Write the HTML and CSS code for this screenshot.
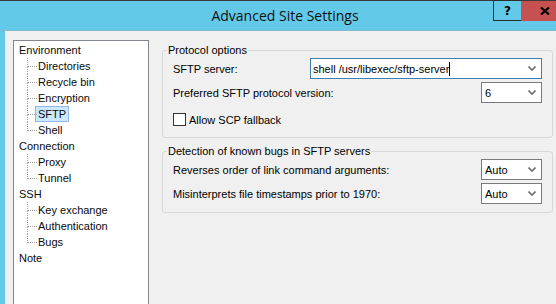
FILE: index.html
```html
<!DOCTYPE html>
<html lang="en">
<head>
    <meta charset="UTF-8">
    <title>Advanced Site Settings</title>
    <link rel="stylesheet" href="styles.css">
</head>
<body>
    <div class="window">
        <div class="titlebar">
            <div class="title">Advanced Site Settings</div>
            <div class="caption-buttons">
                <span class="cap-btn help">?</span>
                <span class="cap-btn close">
                    <svg width="10" height="8" viewBox="0 0 10 8"><path d="M1 0.5 L9 7.5 M9 0.5 L1 7.5" stroke="#000" stroke-width="2.2" fill="none"/></svg>
                </span>
            </div>
        </div>

        <div class="frame">
            <div class="client">
                <ul class="tree">
                    <li><span class="label">Environment</span>
                        <ul class="children">
                            <li><span class="label">Directories</span></li>
                            <li><span class="label">Recycle bin</span></li>
                            <li><span class="label">Encryption</span></li>
                            <li><span class="label selected">SFTP</span></li>
                            <li><span class="label">Shell</span></li>
                        </ul>
                    </li>
                    <li><span class="label">Connection</span>
                        <ul class="children">
                            <li><span class="label">Proxy</span></li>
                            <li><span class="label">Tunnel</span></li>
                        </ul>
                    </li>
                    <li><span class="label">SSH</span>
                        <ul class="children">
                            <li><span class="label">Key exchange</span></li>
                            <li><span class="label">Authentication</span></li>
                            <li><span class="label">Bugs</span></li>
                        </ul>
                    </li>
                    <li><span class="label">Note</span></li>
                </ul>

                <div class="page">
                    <fieldset class="group first">
                        <legend>Protocol options</legend>
                        <div class="row">
                            <label class="field-label fixed">SFTP server:</label>
                            <div class="combo focused wide">
                                <span class="combo-text">shell /usr/libexec/sftp-server</span><span class="caret"></span>
                                <svg class="arrow" width="8" height="5" viewBox="0 0 8 5"><polyline points="0.5,0.5 4,4 7.5,0.5" fill="none" stroke="#6d6d6d" stroke-width="1.6"/></svg>
                            </div>
                        </div>
                        <div class="row">
                            <label class="field-label">Preferred SFTP protocol version:</label>
                            <div class="combo">
                                <span class="combo-text">6</span>
                                <svg class="arrow" width="8" height="5" viewBox="0 0 8 5"><polyline points="0.5,0.5 4,4 7.5,0.5" fill="none" stroke="#6d6d6d" stroke-width="1.6"/></svg>
                            </div>
                        </div>
                        <div class="row check-row">
                            <span class="checkbox"></span>
                            <label class="check-label">Allow SCP fallback</label>
                        </div>
                    </fieldset>

                    <fieldset class="group second">
                        <legend>Detection of known bugs in SFTP servers</legend>
                        <div class="row">
                            <label class="field-label">Reverses order of link command arguments:</label>
                            <div class="combo">
                                <span class="combo-text">Auto</span>
                                <svg class="arrow" width="8" height="5" viewBox="0 0 8 5"><polyline points="0.5,0.5 4,4 7.5,0.5" fill="none" stroke="#6d6d6d" stroke-width="1.6"/></svg>
                            </div>
                        </div>
                        <div class="row">
                            <label class="field-label">Misinterprets file timestamps prior to 1970:</label>
                            <div class="combo">
                                <span class="combo-text">Auto</span>
                                <svg class="arrow" width="8" height="5" viewBox="0 0 8 5"><polyline points="0.5,0.5 4,4 7.5,0.5" fill="none" stroke="#6d6d6d" stroke-width="1.6"/></svg>
                            </div>
                        </div>
                    </fieldset>
                </div>
            </div>
        </div>
    </div>
</body>
</html>
```

FILE: styles.css
```css
body {
    margin: 0;
    font-family: 'Liberation Sans', Arial, sans-serif;
    font-size: 11px;
    color: #000;
}
.window {
    width: 556px;
    height: 304px;
    background-color: #63c9e9;
    display: flex;
    flex-direction: column;
    overflow: hidden;
}
.titlebar {
    position: relative;
    height: 31px;
    box-sizing: border-box;
    border-top: 1px solid #3a3a3a;
    border-bottom: 1px solid #86b9cc;
}
.title {
    font-family: 'Open Sans', sans-serif;
    font-size: 14px;
    line-height: 29px;
    text-align: center;
    padding-left: 14px;
    color: #111;
}
.caption-buttons {
    position: absolute;
    top: -1px;
    right: 0;
    display: flex;
}
.cap-btn {
    height: 21px;
    box-sizing: border-box;
    display: flex;
    justify-content: center;
    align-items: center;
    font-family: 'DejaVu Sans', sans-serif;
    font-weight: bold;
    font-size: 12px;
    color: #000;
}
.help {
    width: 28px;
    border: 1px solid #2e2e2e;
    border-right: none;
}
.close {
    width: 35px;
    background-color: #c75050;
    border-top: 1px solid #3a3a3a;
    justify-content: flex-start;
    padding: 0 0 1px 19px;
}
.frame {
    flex: 1;
    display: flex;
    padding-left: 5px;
}
.client {
    flex: 1;
    display: flex;
    align-items: flex-start;
    gap: 13px;
    background-color: #f0f0f0;
    padding: 9px 3px 0 8px;
}

/* tree */
.tree {
    list-style: none;
    margin: 0;
    width: 136px;
    height: 290px;
    box-sizing: border-box;
    border: 1px solid #828790;
    background-color: white;
    padding: 1px 0 0 5px;
    color: #0a0a0a;
}
.tree li {
    line-height: 16px;
}
.label {
    display: inline-block;
    line-height: 14px;
    border: 1px solid transparent;
    padding: 0 2px;
    margin-left: -3px;
    white-space: nowrap;
}
.children {
    list-style: none;
    margin: 0;
    padding: 0;
}
.children li {
    position: relative;
    padding-left: 19px;
}
.children li::before {
    content: '';
    position: absolute;
    left: 8px;
    top: 0;
    width: 9px;
    height: 8px;
    border-left: 1px dotted #a0a0a0;
    border-bottom: 1px dotted #a0a0a0;
}
.children li:not(:last-child)::after {
    content: '';
    position: absolute;
    left: 8px;
    top: 8px;
    bottom: 0;
    border-left: 1px dotted #a0a0a0;
}
.label.selected {
    background-color: #cce8ff;
    border-color: #8fb8e6;
}

/* page */
.page {
    flex: 1;
    display: flex;
    flex-direction: column;
}
.group {
    margin: 0;
    border: 1px solid #d7d7d7;
    border-radius: 3px;
    padding: 1px 10px 7px 10px;
    min-width: 0;
    display: flex;
    flex-direction: column;
    gap: 3px;
}
.group legend {
    padding: 0 1px;
    margin-left: -6px;
    line-height: 13px;
}
.group.first {
    margin-top: 4px;
}
.group.second {
    margin-top: 7px;
    padding-bottom: 8px;
}
.row {
    display: flex;
    align-items: center;
    justify-content: space-between;
    height: 21px;
}
.field-label.fixed {
    width: 137px;
    flex-shrink: 0;
}
.combo {
    width: 61px;
    height: 21px;
    box-sizing: border-box;
    border: 1px solid #7a7a7a;
    background-color: white;
    display: flex;
    align-items: center;
    padding: 0 5px 0 3px;
}
.combo.wide {
    flex: 1;
    padding-left: 2px;
}
.combo.focused {
    border-color: #3c7fb1;
}
.combo-text {
    white-space: nowrap;
}
.caret {
    width: 1px;
    height: 14px;
    background-color: #000;
}
.arrow {
    margin-left: auto;
}
.check-row {
    justify-content: flex-start;
    margin-top: 3px;
}
.checkbox {
    width: 13px;
    height: 13px;
    box-sizing: border-box;
    border: 1px solid #333;
    background-color: white;
}
.check-label {
    margin-left: 3px;
}
```
